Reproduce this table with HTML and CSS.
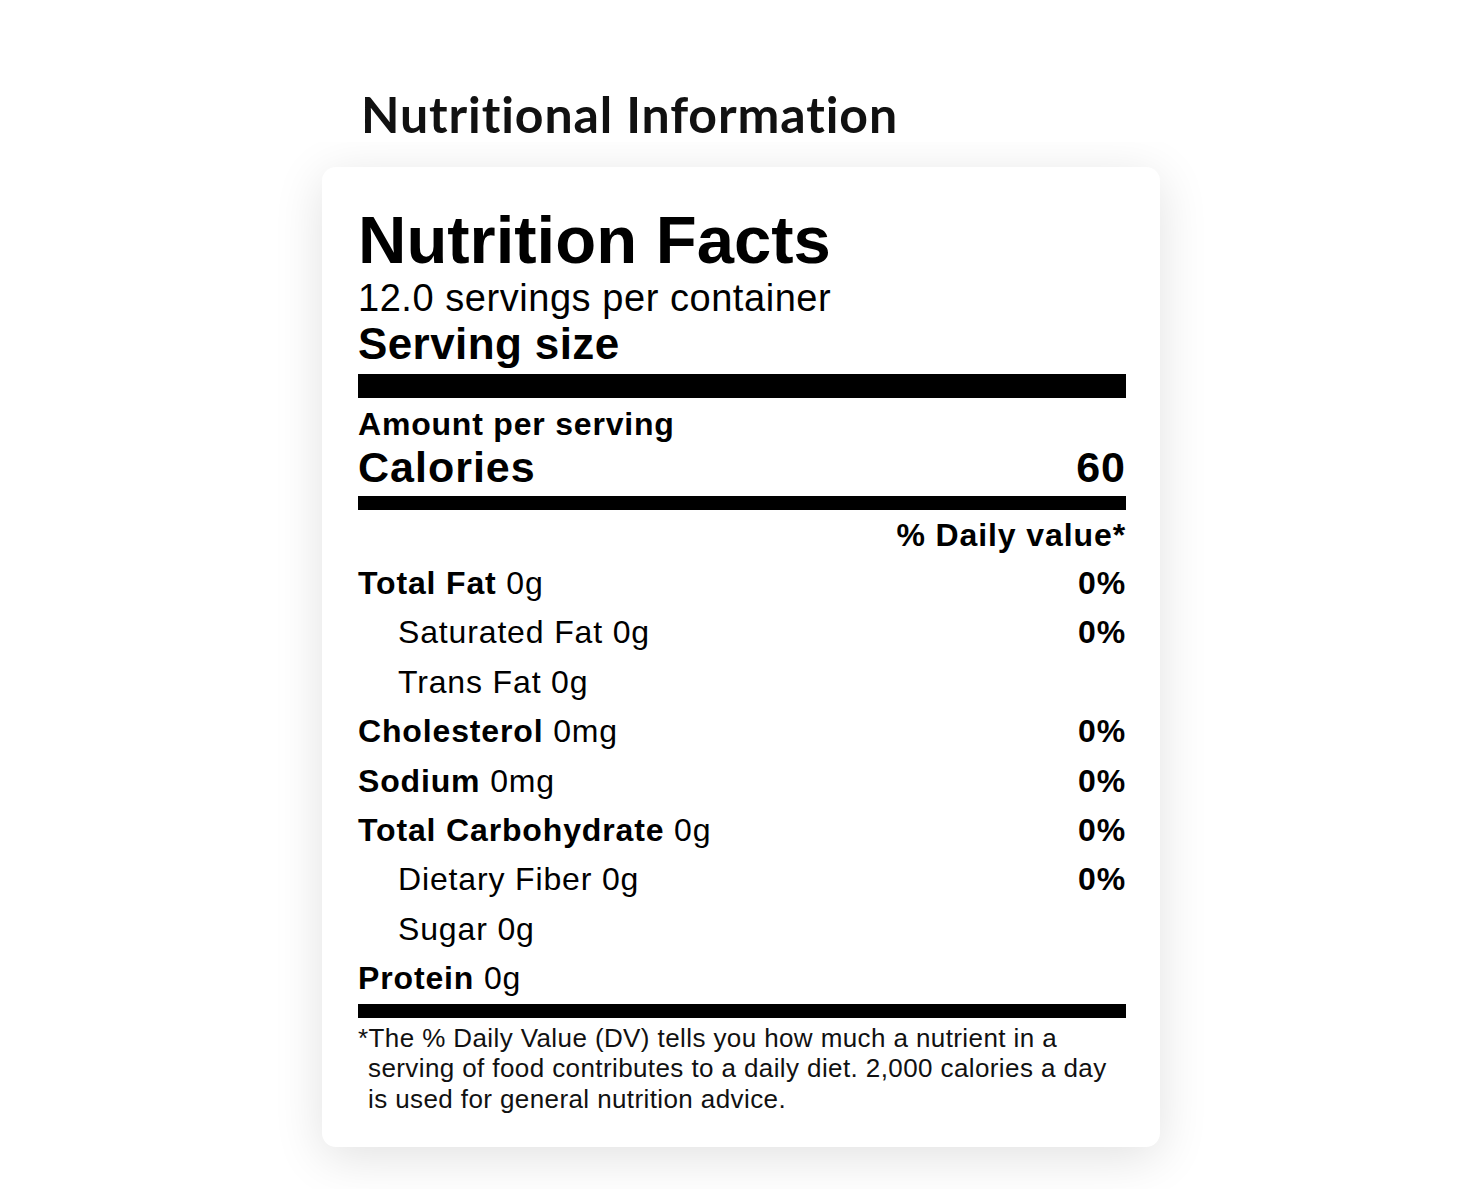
FILE: index.html
```html
<!DOCTYPE html>
<html lang="en">
<head>
<meta charset="utf-8">
<title>Nutritional Information</title>
<link rel="stylesheet" href="styles.css">
</head>
<body>
<main class="page">
  <h1 class="page-title">Nutritional Information</h1>
  <div class="shadow-clip">
    <section class="label">
      <h2 class="label-title">Nutrition Facts</h2>
      <p class="servings">12.0 servings per container</p>
      <p class="serving-size">Serving size</p>
      <div class="bar bar-thick"></div>
      <p class="amount">Amount per serving</p>
      <div class="calories"><span>Calories</span><span>60</span></div>
      <div class="bar bar-medium"></div>
      <p class="dv-head">% Daily value*</p>
      <ul class="rows">
        <li class="row"><span><b>Total Fat</b> 0g</span><b>0%</b></li>
        <li class="row sub"><span>Saturated Fat 0g</span><b>0%</b></li>
        <li class="row sub"><span>Trans Fat 0g</span></li>
        <li class="row"><span><b>Cholesterol</b> 0mg</span><b>0%</b></li>
        <li class="row"><span><b>Sodium</b> 0mg</span><b>0%</b></li>
        <li class="row"><span><b>Total Carbohydrate</b> 0g</span><b>0%</b></li>
        <li class="row sub"><span>Dietary Fiber 0g</span><b>0%</b></li>
        <li class="row sub"><span>Sugar 0g</span></li>
        <li class="row"><span><b>Protein</b> 0g</span></li>
      </ul>
      <div class="bar bar-medium"></div>
      <p class="footnote">*The % Daily Value (DV) tells you how much a nutrient in a serving of food contributes to a daily diet. 2,000 calories a day is used for general nutrition advice.</p>
    </section>
  </div>
</main>
</body>
</html>
```
FILE: styles.css
```css
* { box-sizing: border-box; }
html, body { margin: 0; padding: 0; background: #ffffff; }
body {
  font-family: "Liberation Sans", Arial, sans-serif;
  color: #000;
  padding-left: 6px;
}

.page {
  width: 934px;
  margin: 0 auto;
  padding-top: 86px;
}

.page-title {
  margin: 0 0 0 89px;
  font-family: "Lato", "Noto Sans", sans-serif;
  font-weight: 700;
  font-size: 50px;
  line-height: 56px;
  color: #111;
  letter-spacing: 0.9px;
}

.shadow-clip {
  overflow: hidden;
  padding: 25px 46px 42px 50px;
}

.label {
  background: #fff;
  border-radius: 14px;
  box-shadow: 0 10px 50px rgba(0, 0, 0, 0.12);
  padding: 36px 34px 33px 36px;
}

.label p { margin: 0; }

.label-title {
  margin: 0;
  font-size: 67px;
  line-height: 74px;
  font-weight: 700;
}

.servings {
  font-size: 38px;
  line-height: 43px;
  letter-spacing: 0.55px;
}

.serving-size {
  font-size: 44px;
  line-height: 48px;
  font-weight: 700;
  letter-spacing: 0.4px;
}

.bar { background: #000; }
.bar-thick { height: 24px; margin-top: 6px; }
.bar-medium { height: 14px; }

.amount {
  margin-top: 6px !important;
  font-size: 32px;
  line-height: 40px;
  font-weight: 700;
  letter-spacing: 0.8px;
}

.calories {
  display: flex;
  justify-content: space-between;
  font-size: 43px;
  line-height: 47px;
  font-weight: 700;
  letter-spacing: 1px;
  margin-bottom: 5px;
}

.dv-head {
  margin-top: 3px !important;
  text-align: right;
  font-size: 32px;
  line-height: 44px;
  font-weight: 700;
  letter-spacing: 0.9px;
}

.rows {
  list-style: none;
  margin: 2px 0 0;
  padding: 0;
}

.row {
  display: flex;
  justify-content: space-between;
  font-size: 32px;
  line-height: 49.4px;
  letter-spacing: 0.85px;
}

.row b { font-weight: 700; }
.row.sub { padding-left: 40px; }

.footnote {
  margin-top: 5px !important;
  font-size: 26px;
  line-height: 30.5px;
  padding-left: 10px;
  text-indent: -10px;
  letter-spacing: 0.4px;
  color: #111;
}
```
